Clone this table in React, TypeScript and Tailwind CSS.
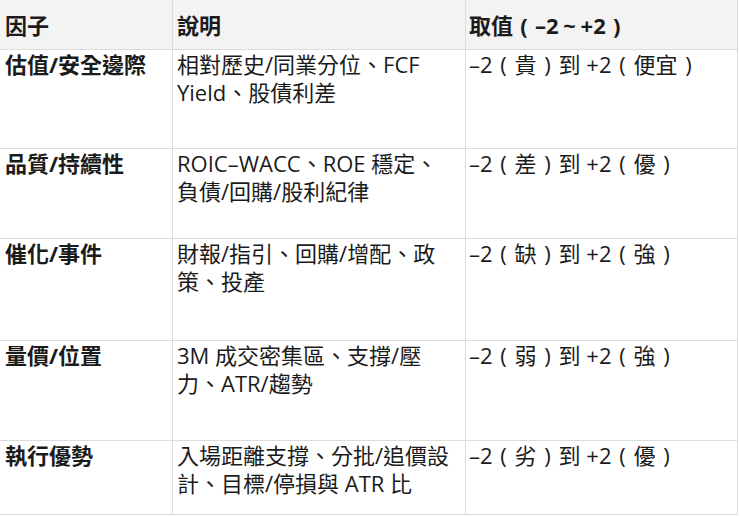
import React from "react";

const P = ({ c }: { c: string }) => (
  <span className="inline-block w-[1em] text-center">{c}</span>
);

const V = ({ a, b }: { a: string; b: string }) => (
  <>
    –2<P c="(" />
    {a}
    <P c=")" />到 +2<P c="(" />
    {b}
    <P c=")" />
  </>
);

const rows: { h: string; f: string; d: React.ReactNode; v: React.ReactNode }[] = [
  {
    h: "h-[99px]",
    f: "估值/安全邊際",
    d: (
      <>
        相對歷史/同業分位、FCF
        <br />
        Yield、股債利差
      </>
    ),
    v: <V a="貴" b="便宜" />,
  },
  {
    h: "h-[90px]",
    f: "品質/持續性",
    d: (
      <>
        ROIC–WACC、ROE 穩定、
        <br />
        負債/回購/股利紀律
      </>
    ),
    v: <V a="差" b="優" />,
  },
  {
    h: "h-[102px]",
    f: "催化/事件",
    d: (
      <>
        財報/指引、回購/增配、政
        <br />
        策、投產
      </>
    ),
    v: <V a="缺" b="強" />,
  },
  {
    h: "h-[100px]",
    f: "量價/位置",
    d: (
      <>
        3M 成交密集區、支撐/壓
        <br />
        力、ATR/趨勢
      </>
    ),
    v: <V a="弱" b="強" />,
  },
  {
    h: "h-[74px]",
    f: "執行優勢",
    d: (
      <>
        入場距離支撐、分批/追價設
        <br />
        計、目標/停損與 ATR 比
      </>
    ),
    v: <V a="劣" b="優" />,
  },
];

export default function App() {
  return (
    <div
      className="w-[740px] h-[516px] bg-white text-[#1b1b1b] text-[22px] leading-[28px]"
      style={{ fontFamily: '"Open Sans", "Noto Sans CJK TC", sans-serif' }}
    >
      <div className="w-[738px]">
        <div className="grid grid-cols-[173px_293px_272px] h-[50px] bg-[#f3f3f3] font-bold border-b border-[#dcdcdc]">
          <div className="border-r border-[#dcdcdc] pl-[5px] flex items-center whitespace-nowrap">因子</div>
          <div className="border-r border-[#dcdcdc] pl-[4px] flex items-center whitespace-nowrap">說明</div>
          <div className="border-r border-[#dcdcdc] pl-[3px] flex items-center whitespace-nowrap">
            <span>
              取值<P c="(" />–2<span className="inline-block w-[1em] text-center">~</span>+2<P c=")" />
            </span>
          </div>
        </div>
        {rows.map((r) => (
          <div
            key={r.f}
            className={`grid grid-cols-[173px_293px_272px] border-b border-[#dcdcdc] ${r.h}`}
          >
            <div className="border-r border-[#dcdcdc] pl-[5px] font-bold whitespace-nowrap">{r.f}</div>
            <div className="border-r border-[#dcdcdc] pl-[4px] whitespace-nowrap">{r.d}</div>
            <div className="border-r border-[#dcdcdc] pl-[3px] whitespace-nowrap">{r.v}</div>
          </div>
        ))}
      </div>
    </div>
  );
}
